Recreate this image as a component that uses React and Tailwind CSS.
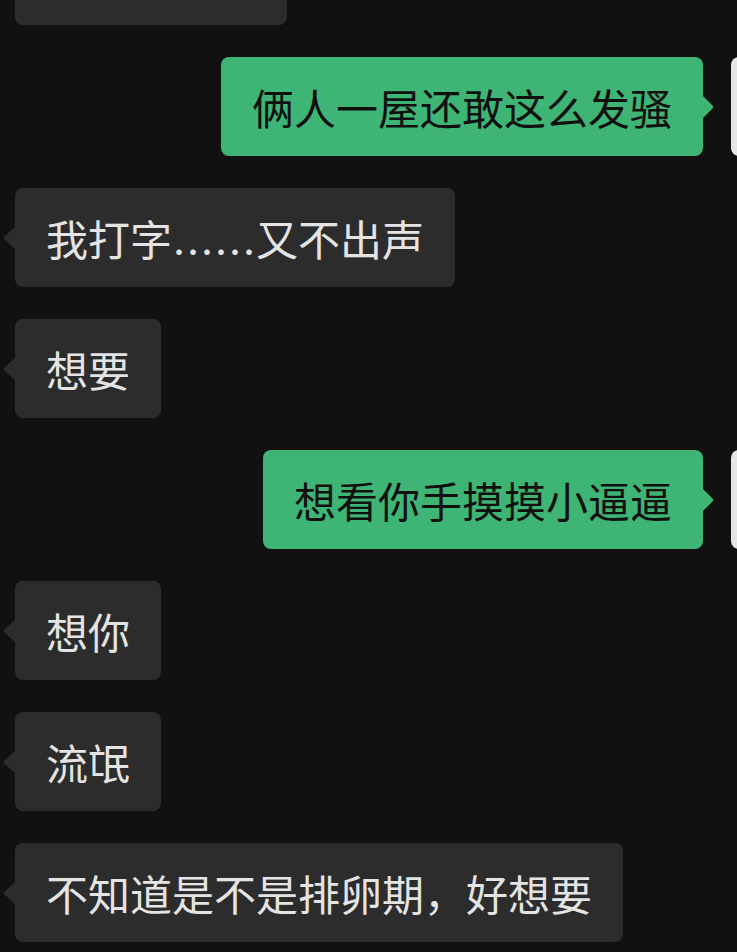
import React from 'react';

const FONT = { fontFamily: '"Noto Sans CJK SC", "Noto Sans", sans-serif' };

const messages = [
  { side: 'left', text: ['我打字', '……', '又不出声'] },
  { side: 'left', text: '想要' },
  { side: 'right', text: '想看你手摸摸小逼逼' },
  { side: 'left', text: '想你' },
  { side: 'left', text: '流氓' },
  { side: 'left', text: '不知道是不是排卵期，好想要' },
];

const LeftTail = () => (
  <svg className="absolute left-[-12px] top-1/2 -translate-y-1/2" width="13" height="24" viewBox="0 0 13 24">
    <path d="M13 0 L1.5 10.5 Q0 12 1.5 13.5 L13 24 Z" fill="#2c2c2c" />
  </svg>
);

const RightTail = () => (
  <svg className="absolute right-[-11px] top-1/2 -translate-y-1/2" width="12" height="24" viewBox="0 0 12 24">
    <path d="M0 0 L10.5 10.5 Q12 12 10.5 13.5 L0 24 Z" fill="#3eb575" />
  </svg>
);

const Text = ({ text }) =>
  Array.isArray(text) ? (
    <span>
      {text[0]}
      <span className="relative top-[12px]">{text[1]}</span>
      {text[2]}
    </span>
  ) : (
    <span>{text}</span>
  );

const LeftBubble = ({ text }) => (
  <div className="flex">
    <div className="relative flex h-[99px] items-center rounded-lg bg-[#2c2c2c] px-[31px] text-[42px] leading-none text-[#e4e4e4]">
      <LeftTail />
      <Text text={text} />
    </div>
  </div>
);

const RightBubble = ({ text }) => (
  <div className="-mr-[93px] flex items-start justify-end gap-[28px]">
    <div className="relative flex h-[99px] items-center rounded-lg bg-[#3eb575] px-[31px] text-[42px] leading-none text-[#101010]">
      <RightTail />
      <Text text={text} />
    </div>
    <div className="h-[99px] w-[99px] shrink-0 rounded-lg bg-[#e6e6e6]" />
  </div>
);

export default function App() {
  return (
    <div className="h-[952px] w-[737px] overflow-hidden bg-[#111111]" style={FONT}>
      <div className="flex flex-col gap-[32px] pl-[15px]">
        <div className="-mt-[74px] h-[99px] w-[272px] rounded-lg bg-[#2c2c2c]" />
        <RightBubble text="俩人一屋还敢这么发骚" />
        {messages.map((m, i) =>
          m.side === 'left' ? (
            <LeftBubble key={i} text={m.text} />
          ) : (
            <RightBubble key={i} text={m.text} />
          )
        )}
      </div>
    </div>
  );
}
